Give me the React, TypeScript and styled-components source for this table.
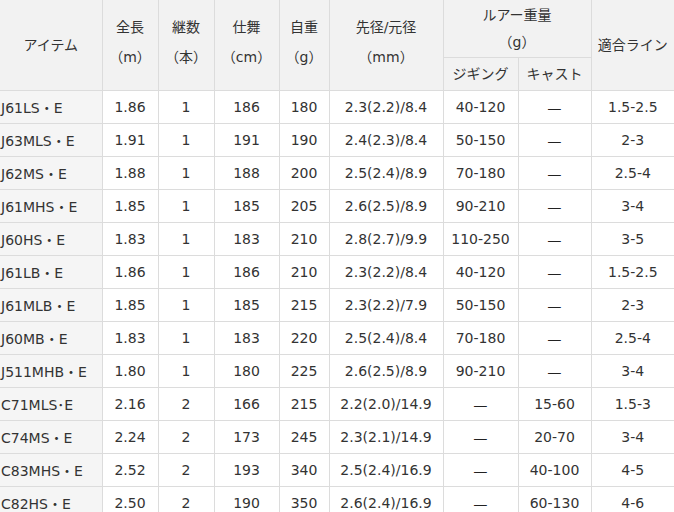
import React from 'react'
import styled, { createGlobalStyle } from 'styled-components'

const GlobalStyle = createGlobalStyle`
  html, body {
    margin: 0;
    padding: 0;
    background: #ffffff;
  }
  body {
    font-family: "DejaVu Sans", "Noto Sans CJK JP", sans-serif;
    color: #333333;
  }
`

const Wrapper = styled.div`
  width: 674px;
  height: 512px;
  overflow: hidden;
`

const SpecTable = styled.table`
  width: 674px;
  border-collapse: collapse;
  border-style: hidden;
  table-layout: fixed;
  font-size: 14px;
`

type HeadKind = 'single' | 'span' | 'group'

const HeadCell = styled.th<{ kind?: HeadKind }>`
  background: #f2f2f2;
  border: 1px solid #dcdcdc;
  font-weight: normal;
  color: #333333;
  text-align: center;
  vertical-align: middle;
  padding: ${(p) => (p.kind === 'span' ? '0 0 6px 0' : '0')};
  line-height: ${(p) => (p.kind === 'span' ? '30px' : '27px')};
  height: ${(p) => (p.kind === 'group' ? '57px' : '32px')};
`

const NameCell = styled.td`
  background: #f5f5f5;
  border: 1px solid #dcdcdc;
  text-align: left;
  padding: 0 0 0 1px;
  height: 32px;
  white-space: nowrap;
`

const Cell = styled.td`
  border: 1px solid #dcdcdc;
  text-align: center;
  padding: 0;
  height: 32px;
  white-space: nowrap;
`

const Dash = styled.span`
  font-family: "Noto Sans CJK JP", sans-serif;
  font-size: 16px;
  color: #222222;
`

type Rod = {
  name: string
  length: string
  pieces: string
  closed: string
  weight: string
  diameter: string
  jig: string
  cast: string
  line: string
}

const rods: Rod[] = [
  { name: 'J61LS・E', length: '1.86', pieces: '1', closed: '186', weight: '180', diameter: '2.3(2.2)/8.4', jig: '40-120', cast: '', line: '1.5-2.5' },
  { name: 'J63MLS・E', length: '1.91', pieces: '1', closed: '191', weight: '190', diameter: '2.4(2.3)/8.4', jig: '50-150', cast: '', line: '2-3' },
  { name: 'J62MS・E', length: '1.88', pieces: '1', closed: '188', weight: '200', diameter: '2.5(2.4)/8.9', jig: '70-180', cast: '', line: '2.5-4' },
  { name: 'J61MHS・E', length: '1.85', pieces: '1', closed: '185', weight: '205', diameter: '2.6(2.5)/8.9', jig: '90-210', cast: '', line: '3-4' },
  { name: 'J60HS・E', length: '1.83', pieces: '1', closed: '183', weight: '210', diameter: '2.8(2.7)/9.9', jig: '110-250', cast: '', line: '3-5' },
  { name: 'J61LB・E', length: '1.86', pieces: '1', closed: '186', weight: '210', diameter: '2.3(2.2)/8.4', jig: '40-120', cast: '', line: '1.5-2.5' },
  { name: 'J61MLB・E', length: '1.85', pieces: '1', closed: '185', weight: '215', diameter: '2.3(2.2)/7.9', jig: '50-150', cast: '', line: '2-3' },
  { name: 'J60MB・E', length: '1.83', pieces: '1', closed: '183', weight: '220', diameter: '2.5(2.4)/8.4', jig: '70-180', cast: '', line: '2.5-4' },
  { name: 'J511MHB・E', length: '1.80', pieces: '1', closed: '180', weight: '225', diameter: '2.6(2.5)/8.9', jig: '90-210', cast: '', line: '3-4' },
  { name: 'C71MLS･E', length: '2.16', pieces: '2', closed: '166', weight: '215', diameter: '2.2(2.0)/14.9', jig: '', cast: '15-60', line: '1.5-3' },
  { name: 'C74MS・E', length: '2.24', pieces: '2', closed: '173', weight: '245', diameter: '2.3(2.1)/14.9', jig: '', cast: '20-70', line: '3-4' },
  { name: 'C83MHS・E', length: '2.52', pieces: '2', closed: '193', weight: '340', diameter: '2.5(2.4)/16.9', jig: '', cast: '40-100', line: '4-5' },
  { name: 'C82HS・E', length: '2.50', pieces: '2', closed: '190', weight: '350', diameter: '2.6(2.4)/16.9', jig: '', cast: '60-130', line: '4-6' }
]

const widths = [102, 56, 56, 65, 50, 114, 75, 73, 83]

const orDash = (v: string) => (v ? v : <Dash>—</Dash>)

export default function App() {
  return (
    <Wrapper>
      <GlobalStyle />
      <SpecTable>
        <colgroup>
          {widths.map((w, i) => (
            <col key={i} style={{ width: w }} />
          ))}
        </colgroup>
        <thead>
          <tr>
            <HeadCell rowSpan={2}>アイテム</HeadCell>
            <HeadCell rowSpan={2} kind="span">
              全長
              <br />
              （m）
            </HeadCell>
            <HeadCell rowSpan={2} kind="span">
              継数
              <br />
              （本）
            </HeadCell>
            <HeadCell rowSpan={2} kind="span">
              仕舞
              <br />
              （cm）
            </HeadCell>
            <HeadCell rowSpan={2} kind="span">
              自重
              <br />
              （g）
            </HeadCell>
            <HeadCell rowSpan={2} kind="span">
              先径/元径
              <br />
              （mm）
            </HeadCell>
            <HeadCell colSpan={2} kind="group">
              ルアー重量
              <br />
              （g）
            </HeadCell>
            <HeadCell rowSpan={2}>適合ライン</HeadCell>
          </tr>
          <tr>
            <HeadCell>ジギング</HeadCell>
            <HeadCell>キャスト</HeadCell>
          </tr>
        </thead>
        <tbody>
          {rods.map((r) => (
            <tr key={r.name}>
              <NameCell>{r.name}</NameCell>
              <Cell>{r.length}</Cell>
              <Cell>{r.pieces}</Cell>
              <Cell>{r.closed}</Cell>
              <Cell>{r.weight}</Cell>
              <Cell>{r.diameter}</Cell>
              <Cell>{orDash(r.jig)}</Cell>
              <Cell>{orDash(r.cast)}</Cell>
              <Cell>{r.line}</Cell>
            </tr>
          ))}
        </tbody>
      </SpecTable>
    </Wrapper>
  )
}
